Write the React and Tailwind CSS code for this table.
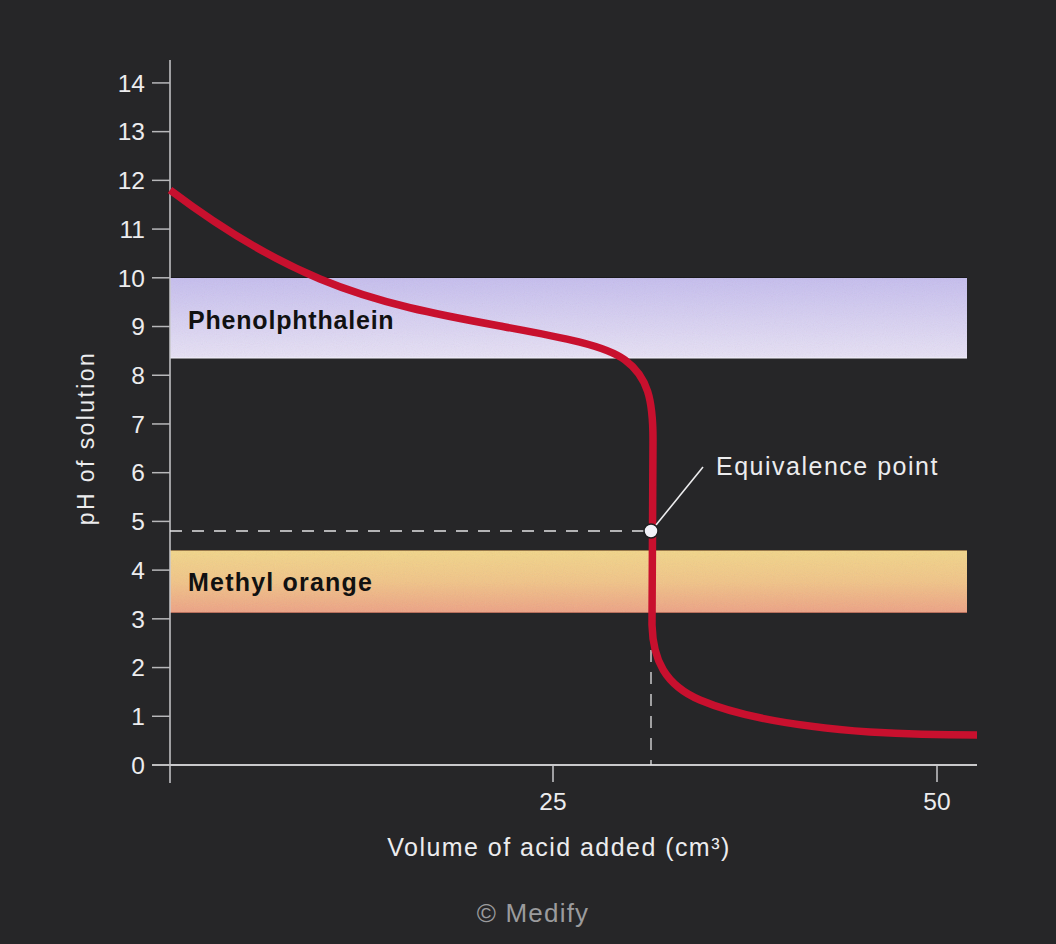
import React from 'react';

const yTicks = [14, 13, 12, 11, 10, 9, 8, 7, 6, 5, 4, 3, 2, 1, 0];
const yOf = (v) => 765 - 48.72 * v;

export default function App() {
  return (
    <div className="w-[1056px] h-[944px] bg-[#262628] font-['Liberation_Sans',Arial,sans-serif] flex flex-col items-center">
      <svg width="1056" height="880" viewBox="0 0 1056 880" className="block">
        <defs>
          <linearGradient id="phenol" x1="0" y1="0" x2="0" y2="1">
            <stop offset="0" stopColor="#c5bdee" />
            <stop offset="1" stopColor="#e7e1f5" />
          </linearGradient>
          <linearGradient id="methyl" x1="0" y1="0" x2="0" y2="1">
            <stop offset="0" stopColor="#f2d689" />
            <stop offset="0.5" stopColor="#f1c487" />
            <stop offset="1" stopColor="#eda184" />
          </linearGradient>
          <filter id="grain" x="0" y="0" width="100%" height="100%">
            <feTurbulence type="fractalNoise" baseFrequency="0.9" numOctaves="2" seed="3" />
            <feColorMatrix type="saturate" values="0.6" />
            <feComposite in2="SourceGraphic" operator="in" />
          </filter>
        </defs>

        {/* indicator bands */}
        <rect x="170" y="277" width="797" height="81" fill="url(#phenol)" />
        <rect x="170" y="277" width="797" height="81" fill="#fff" filter="url(#grain)" opacity="0.12" />
        <line x1="170" y1="277.5" x2="967" y2="277.5" stroke="#1a1a1c" strokeWidth="1" />
        <line x1="170" y1="358" x2="967" y2="358" stroke="#f4f2fa" strokeWidth="1" />
        <rect x="170" y="550" width="797" height="63" fill="url(#methyl)" />
        <rect x="170" y="550" width="797" height="63" fill="#fff" filter="url(#grain)" opacity="0.12" />
        <line x1="170" y1="550.5" x2="967" y2="550.5" stroke="#9a7b4c" strokeWidth="1" />
        <line x1="170" y1="612.5" x2="967" y2="612.5" stroke="#b7705e" strokeWidth="1" />

        <text x="188" y="329" fontSize="25" fontWeight="700" fill="#111" letterSpacing="0.8">Phenolphthalein</text>
        <text x="188" y="591" fontSize="25" fontWeight="700" fill="#111" letterSpacing="1.2">Methyl orange</text>

        {/* axes */}
        <line x1="170" y1="60" x2="170" y2="783" stroke="#c9c9cb" strokeWidth="1.5" />
        <line x1="152" y1="765" x2="977" y2="765" stroke="#c9c9cb" strokeWidth="2" />
        {yTicks.map((v) => (
          <g key={v}>
            <line x1="152" y1={yOf(v)} x2="170" y2={yOf(v)} stroke="#b8b8ba" strokeWidth="1.5" />
            <text x="145" y={yOf(v) + 8.8} fontSize="24.5" fill="#ececee" textAnchor="end">{v}</text>
          </g>
        ))}
        <line x1="553" y1="765" x2="553" y2="782" stroke="#c9c9cb" strokeWidth="1.5" />
        <line x1="937" y1="765" x2="937" y2="782" stroke="#c9c9cb" strokeWidth="1.5" />
        <text x="553" y="810" fontSize="24.5" fill="#ececee" textAnchor="middle">25</text>
        <text x="937" y="810" fontSize="24.5" fill="#ececee" textAnchor="middle">50</text>

        <text x="559" y="856" fontSize="25" fill="#ececee" textAnchor="middle" letterSpacing="1.45">
          Volume of acid added (cm³)
        </text>
        <text transform="translate(94 438) rotate(-90)" fontSize="23" fill="#ececee" textAnchor="middle" letterSpacing="2.4">
          pH of solution
        </text>

        {/* equivalence guides */}
        <line x1="170" y1="531" x2="645" y2="531" stroke="#e2e2e4" strokeWidth="1.3" strokeDasharray="12 10" />
        <line x1="651" y1="540" x2="651" y2="765" stroke="#e2e2e4" strokeWidth="1.3" strokeDasharray="12 10" />

        {/* titration curve */}
        <path
          d="M170,190 C215,224 265,256 320,279 C380,304 440,315 500,326 C560,337 605,345 625,360 C648,377 653,400 653,440 L652,625 C653,660 665,685 700,700 C740,717 800,727 870,732 C920,735 950,735 977,735"
          fill="none"
          stroke="#c8102e"
          strokeWidth="7.5"
          strokeLinecap="butt"
        />

        <line x1="656" y1="525" x2="703" y2="467" stroke="#ececee" strokeWidth="1.6" />
        <circle cx="651" cy="531" r="7" fill="#f2f2f8" stroke="#1e1e20" strokeWidth="1.5" />
        <text x="716" y="475" fontSize="25" fill="#ececee" letterSpacing="1.5">Equivalence point</text>
      </svg>
      <div className="mt-[20px] text-[26px] leading-none text-[#9b9b9d] tracking-[1.2px] translate-x-[5px]">
        © Medify
      </div>
    </div>
  );
}
